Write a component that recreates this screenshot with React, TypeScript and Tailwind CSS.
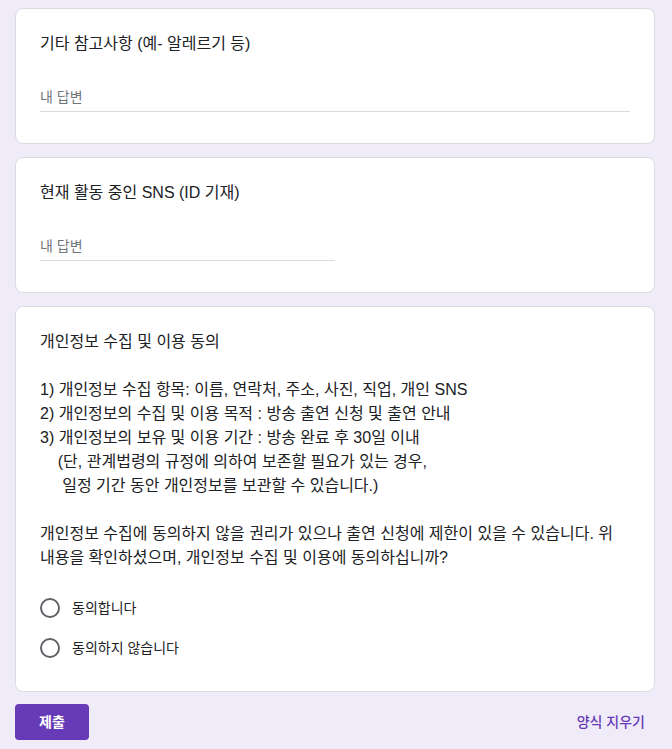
import React from "react";

const font = { fontFamily: '"Liberation Sans", "Noto Sans CJK KR", sans-serif' };

function Card({ children, className = "" }: { children: React.ReactNode; className?: string }) {
  return (
    <div className={"w-[640px] rounded-lg border border-[#dadce0] bg-white px-6 " + className}>
      {children}
    </div>
  );
}

function TextQuestion({ title, half }: { title: string; half?: boolean }) {
  return (
    <Card className="pt-[23px] pb-[31px]">
      <div className="text-base leading-6 text-[#202124]">{title}</div>
      <div className={"mt-[31px] border-b border-[#dadce0] pb-1 " + (half ? "w-1/2" : "w-full")}>
        <div className="text-sm leading-5 text-[#70757a]">내 답변</div>
      </div>
    </Card>
  );
}

function Radio({ label }: { label: string }) {
  return (
    <div className="flex h-10 items-center">
      <div className="h-5 w-5 rounded-full border-2 border-[#5f6368]" />
      <span className="ml-3 text-sm text-[#202124]">{label}</span>
    </div>
  );
}

const desc = `개인정보 수집 및 이용 동의

1) 개인정보 수집 항목: 이름, 연락처, 주소, 사진, 직업, 개인 SNS
2) 개인정보의 수집 및 이용 목적 : 방송 출연 신청 및 출연 안내
3) 개인정보의 보유 및 이용 기간 : 방송 완료 후 30일 이내
    (단, 관계법령의 규정에 의하여 보존할 필요가 있는 경우,
     일정 기간 동안 개인정보를 보관할 수 있습니다.)

개인정보 수집에 동의하지 않을 권리가 있으나 출연 신청에 제한이 있을 수 있습니다. 위 내용을 확인하셨으며, 개인정보 수집 및 이용에 동의하십니까?`;

export default function App() {
  return (
    <div className="min-h-[749px] bg-[#f0ebf8] pl-[15px] pt-2" style={font}>
      <div className="flex w-[640px] flex-col gap-[13px]">
        <TextQuestion title="기타 참고사항 (예- 알레르기 등)" />
        <TextQuestion title="현재 활동 중인 SNS (ID 기재)" half />
        <Card className="pt-[23px] pb-[23px]">
          <div className="whitespace-pre-wrap text-base leading-6 text-[#202124]">{desc}</div>
          <div className="mt-[18px] flex flex-col">
            <Radio label="동의합니다" />
            <Radio label="동의하지 않습니다" />
          </div>
        </Card>
      </div>
      <div className="mt-3 flex w-[640px] items-center justify-between">
        <button className="flex h-9 w-[74px] items-center justify-center rounded bg-[#673ab7] text-sm font-bold text-white">
          제출
        </button>
        <span className="mr-[10px] text-sm font-medium text-[#673ab7]">양식 지우기</span>
      </div>
    </div>
  );
}
